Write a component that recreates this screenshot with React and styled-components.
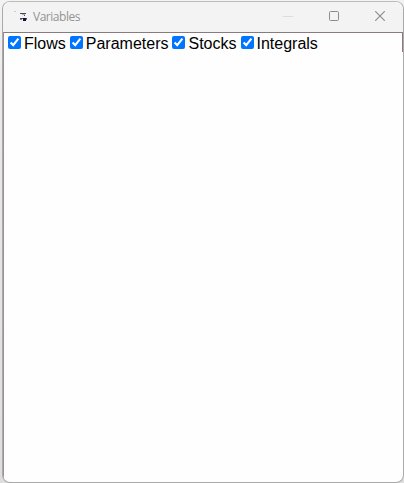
import React, { useState } from "react";
import styled, { createGlobalStyle } from "styled-components";

const GlobalStyle = createGlobalStyle`
  html, body, #root { height: 100%; }
  body { margin: 0; overflow: hidden; }
`;

const Desktop = styled.div`
  box-sizing: border-box;
  width: 404px;
  height: 483px;
  padding: 1px 0 0 2px;
  background: linear-gradient(#f3f3f3 0%, #e9e9e9 20%, #dedede 100%);
`;

const Window = styled.section`
  box-sizing: border-box;
  display: flex;
  flex-direction: column;
  width: 402px;
  height: 482px;
  overflow: hidden;
  border: 1px solid #aaaaaa;
  border-top-color: #bcbcbc;
  border-radius: 8px;
  background: #fefefe;
`;

const TitleBar = styled.header`
  display: flex;
  flex: none;
  align-items: center;
  box-sizing: border-box;
  height: 30px;
  padding-bottom: 2px;
  background: #f3f3f3;
`;

const AppIcon = styled.svg`
  flex: none;
  width: 16px;
  height: 16px;
  margin-left: 10px;
`;

const Title = styled.h1`
  flex: 1;
  margin: 2px 0 0 4px;
  color: #949494;
  font: 400 12px/16px "Open Sans", "Noto Sans", sans-serif;
  letter-spacing: -0.48px;
`;

const WindowButton = styled.button`
  display: flex;
  align-items: center;
  justify-content: center;
  width: 46px;
  height: 28px;
  padding: 0;
  border: 0;
  background: transparent;
  color: ${({ $faded }) => ($faded ? "#dddddd" : "#8c8c8c")};
`;

const Content = styled.main`
  display: flex;
  flex: 1;
  align-items: flex-start;
  box-sizing: border-box;
  border-top: 1px solid #897b7d;
  border-left: 1px solid #9b9192;
`;

const FilterBar = styled.div`
  display: flex;
  flex: 1;
  box-sizing: border-box;
  height: 19px;
  border-right: 1px solid #897b7d;
`;

const Filter = styled.label`
  display: flex;
  align-items: flex-start;
  color: #000;
  font: 16px/20px "Liberation Sans", Arial, sans-serif;
  white-space: nowrap;
  padding-top: 1px;
`;

const Checkbox = styled.input`
  width: 13px;
  height: 13px;
  margin: 2px 3px 3px 4px;
`;

const FILTERS = ["Flows", "Parameters", "Stocks", "Integrals"];

export default function App() {
  const [shown, setShown] = useState(() => new Set(FILTERS));

  const toggle = (name) => {
    const next = new Set(shown);
    if (!next.delete(name)) next.add(name);
    setShown(next);
  };

  return (
    <>
      <GlobalStyle />
      <Desktop>
        <Window>
          <TitleBar>
            <AppIcon viewBox="0 0 16 16" shapeRendering="crispEdges" aria-hidden="true">
              <path d="M1 3h2v1H1z" fill="#cfcfcf" />
              <path d="M7 5h6v1H7z" fill="#4b4858" />
              <path d="M9 6h3v1H9z" fill="#aaa7b2" />
              <path d="M11 7h1v1h-1z" fill="#55505f" />
              <path d="M7 10h7v1H7z" fill="#55506b" />
              <path d="M10 10h3v3h-3z" fill="#15103d" />
              <path d="M7 11h2v1H7zM13 11h1v1h-1z" fill="#858096" />
            </AppIcon>
            <Title>Variables</Title>
            <WindowButton aria-label="Minimize" $faded>
              <svg width="10" height="10" viewBox="0 0 10 10" stroke="currentColor">
                <path d="M0 5.5h10" />
              </svg>
            </WindowButton>
            <WindowButton aria-label="Maximize">
              <svg width="10" height="10" viewBox="0 0 10 10" fill="none" stroke="currentColor">
                <rect x=".5" y=".5" width="9" height="9" rx="1" />
              </svg>
            </WindowButton>
            <WindowButton aria-label="Close">
              <svg width="10" height="10" viewBox="0 0 10 10" fill="none" stroke="currentColor" strokeWidth="1.15">
                <path d="M.2.2l9.6 9.6M9.8.2L.2 9.8" />
              </svg>
            </WindowButton>
          </TitleBar>
          <Content>
            <FilterBar>
              {FILTERS.map((name) => (
                <Filter key={name}>
                  <Checkbox type="checkbox" checked={shown.has(name)} onChange={() => toggle(name)} />
                  {name}
                </Filter>
              ))}
            </FilterBar>
          </Content>
        </Window>
      </Desktop>
    </>
  );
}
